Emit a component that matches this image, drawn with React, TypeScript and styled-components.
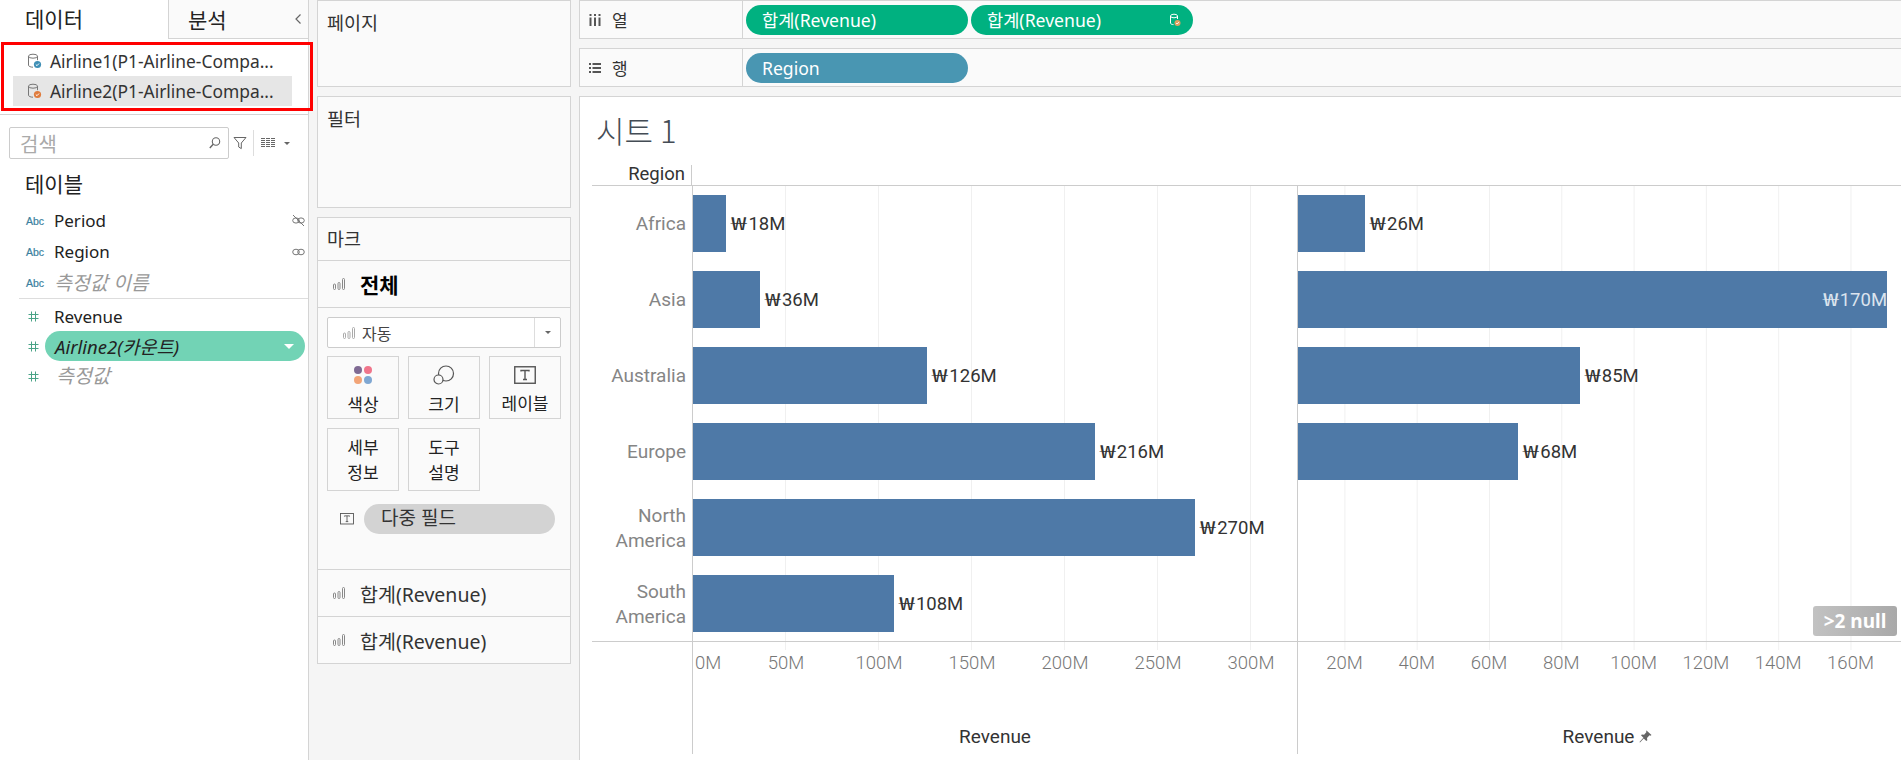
import React from "react";
import styled, { createGlobalStyle } from "styled-components";

const Global = createGlobalStyle`
  html, body { margin: 0; padding: 0; background: #f5f5f5; overflow: hidden; }
  * { box-sizing: border-box; }
  #root { width: 1901px; height: 760px; font-family: "Noto Sans", "Noto Sans CJK KR", sans-serif; color: #222; }
`;
const LINE = "#d4d4d4";
const Page = styled.div`display: flex; width: 1901px; height: 760px; overflow: hidden; background: #f5f5f5;`;

/* ---------- sidebar ---------- */
const Sidebar = styled.aside`position: relative; flex: 0 0 309px; height: 760px; background: #fff; border-right: 1px solid ${LINE};`;
const Tabs = styled.div`display: flex; height: 39px;`;
const DataTab = styled.div`flex: 0 0 168px; padding-left: 25px; font-size: 21px; line-height: 39px;`;
const AnalysisTab = styled.div`flex: 1; display: flex; justify-content: space-between; align-items: center; padding: 0 6px 0 19px; font-size: 21px; background: #fafafa; border-left: 1px solid ${LINE}; border-bottom: 1px solid ${LINE};`;
const Sources = styled.div`padding: 7px 16px 8px 13px; border-bottom: 1px solid ${LINE};`;
const SourceRow = styled.div<{ $active?: boolean }>`display: flex; align-items: center; gap: 8px; width: 279px; height: 30px; padding-left: 14px; font-size: 17.4px; color: #333; background: ${(p) => (p.$active ? "#e6e6e6" : "transparent")};`;
const RedFrame = styled.div`position: absolute; left: 1px; top: 42px; width: 312px; height: 69px; border: 3px solid #f00; pointer-events: none;`;
const SearchRow = styled.div`display: flex; align-items: center; margin: 12px 0 0 9px; height: 32px;`;
const SearchBox = styled.div`display: flex; justify-content: space-between; align-items: center; width: 220px; height: 32px; padding: 0 6px 0 10px; border: 1px solid #ccc; border-radius: 2px; color: #aaa; font-size: 20px;`;
const SearchTools = styled.div`display: flex; align-items: center; margin-left: 4px; height: 28px;`;
const ToolSep = styled.div`width: 1px; height: 26px; background: #ddd; margin: 0 7px 0 6px;`;
const CaretGap = styled.span`width: 9px;`;
const SectionTitle = styled.div`height: 46px; padding-left: 25px; font-size: 21px; line-height: 50px;`;
const FieldGroup = styled.div<{ $divider?: boolean }>`
  padding-top: ${(p) => (p.$divider ? "2px" : "0")};
  ${(p) => (p.$divider ? `margin-left: 19px; border-top: 1px solid #ddd;` : "")}
`;
const FieldRow = styled.div<{ $h: number; $inset?: boolean }>`display: flex; align-items: center; height: ${(p) => p.$h}px; padding-left: ${(p) => (p.$inset ? "7px" : "26px")}; padding-right: 3px;`;
const Abc = styled.span`flex: 0 0 28px; font-size: 10.5px; font-weight: 400; -webkit-text-stroke: 0.2px #3a7f9e; color: #3a7f9e; font-family: "Liberation Sans", sans-serif;`;
const HashCell = styled.span`flex: 0 0 19px; padding-left: 2px; display: flex;`;
const FieldName = styled.span<{ $calc?: boolean; $indent?: number }>`flex: 1; margin-left: ${(p) => p.$indent ?? 0}px; margin-top: ${(p) => (p.$calc ? -3 : 0)}px; font-size: ${(p) => (p.$calc ? 19.5 : 17)}px; color: ${(p) => (p.$calc ? "#999" : "#222")}; font-style: ${(p) => (p.$calc ? "italic" : "normal")};`;
const FieldPill = styled.div`flex: 1; display: flex; align-items: center; justify-content: space-between; height: 30px; padding: 0 11px 0 10px; background: #72d3b5; border-radius: 15px; font-size: 18.5px; font-style: italic; color: #222;`;
const CaretDown = styled.span<{ $c: string; $s: number }>`width: 0; height: 0; border-left: ${(p) => p.$s}px solid transparent; border-right: ${(p) => p.$s}px solid transparent; border-top: ${(p) => p.$s}px solid ${(p) => p.$c};`;

/* ---------- middle ---------- */
const Middle = styled.div`flex: 0 0 254px; margin-left: 8px; display: flex; flex-direction: column;`;
const Card = styled.section<{ $h?: number; $mb?: number }>`
  ${(p) => (p.$h ? `height: ${p.$h}px;` : "")}
  margin-bottom: ${(p) => p.$mb ?? 9}px;
  background: #fafafa; border: 1px solid ${LINE};
`;
const CardTitle = styled.div`padding: 8px 9px 0; font-size: 18.5px; color: #333;`;
const MarkHead = styled.div`height: 43px; padding: 7px 9px 0; font-size: 18.5px; color: #333; border-bottom: 1px solid ${LINE};`;
const MarkLayer = styled.div<{ $bold?: boolean; $line?: boolean }>`
  display: flex; align-items: center; height: 47px; padding-left: 15px; gap: 14px;
  ${(p) => (p.$line ? `border-top: 1px solid ${LINE};` : `border-bottom: 1px solid ${LINE};`)}
  font-size: ${(p) => (p.$bold ? 21 : 19.5)}px; font-weight: ${(p) => (p.$bold ? 700 : 400)}; color: ${(p) => (p.$bold ? "#000" : "#333")};
`;
const MarkBody = styled.div`padding: 9px 9px 35px;`;
const TypeSelect = styled.div`display: flex; height: 31px; width: 234px; background: #fff; border: 1px solid #ccc; border-radius: 2px; margin-bottom: 8px;`;
const TypeValue = styled.div`flex: 1; display: flex; align-items: center; gap: 6px; padding-left: 15px; font-size: 16px; color: #444;`;
const TypeCaret = styled.div`flex: 0 0 26px; display: flex; align-items: center; justify-content: center; border-left: 1px solid #ddd;`;
const MarkGrid = styled.div`display: grid; grid-template-columns: repeat(3, 72px); grid-auto-rows: 63px; gap: 9px;`;
const MarkBtn = styled.div<{ $icon?: boolean }>`display: flex; flex-direction: column; align-items: center; justify-content: center; gap: 7px; padding-top: ${(p) => (p.$icon ? "7px" : "0")}; border: 1px solid #d4d4d4; background: #fafafa; font-size: 17px; line-height: 25px; text-align: center; color: #222;`;
const MarkSlot = styled.div`display: flex; align-items: center; margin: 13px 0 0 13px; gap: 10px;`;
const GrayPill = styled.div`width: 191px; height: 30px; padding-left: 17px; border-radius: 15px; background: #d3d3d3; font-size: 19px; line-height: 28px; color: #333;`;

/* ---------- main ---------- */
const Main = styled.main`flex: 1; margin-left: 8px; display: flex; flex-direction: column; min-width: 0;`;
const Shelf = styled.div<{ $mb: number }>`display: flex; height: 39px; margin-bottom: ${(p) => p.$mb}px; background: #fafafa; border: 1px solid ${LINE}; border-right: 0;`;
const ShelfHead = styled.div`flex: 0 0 163px; display: flex; align-items: center; padding-left: 9px; gap: 11px; font-size: 17px; color: #333; border-right: 1px solid ${LINE};`;
const ShelfPills = styled.div`display: flex; align-items: center; gap: 3px; padding-left: 3px;`;
const Pill = styled.div<{ $bg: string }>`display: flex; align-items: center; justify-content: space-between; width: 222px; height: 30px; padding: 0 12px 0 16px; border-radius: 15px; background: ${(p) => p.$bg}; color: #fff; font-size: 17.6px; white-space: nowrap;`;

const View = styled.div`flex: 1; background: #fff; border: 1px solid ${LINE}; border-right: 0; border-bottom: 0; padding-left: 12px; font-family: Roboto, "Noto Sans CJK KR", sans-serif;`;
const SheetTitle = styled.div`height: 66px; padding: 14px 0 0 4px; font-size: 31px; line-height: 38px; font-weight: 300; color: #444c55; font-family: "Noto Sans CJK KR", sans-serif;`;
const ChartHead = styled.div`display: flex; height: 23px; border-bottom: 1px solid #ccc;`;
const ColHead = styled.div`flex: 0 0 100px; margin: 2px -1px 0 0; padding-right: 6px; text-align: right; font-size: 18.5px; line-height: 18px; color: #333; border-right: 1px solid #ccc;`;
const ChartBody = styled.div`display: flex; height: 456px; border-bottom: 1px solid #ccc;`;
const LabelCol = styled.div`flex: 0 0 100px;`;
const RowLabel = styled.div`display: flex; align-items: center; justify-content: flex-end; height: 76px; padding: 0 6px 1px 0; text-align: right; font-size: 19px; line-height: 25px; color: #858585;`;
const Pane = styled.div<{ $w: number; $step: number; $off: number }>`
  position: relative; flex: 0 0 ${(p) => p.$w}px; border-left: 1px solid #ccc; overflow: hidden;
  background-image: linear-gradient(to right, #f0f0f0 1px, transparent 1px);
  background-size: ${(p) => p.$step}px 100%;
  background-position: ${(p) => p.$off}px 0;
`;
const BarRow = styled.div`display: flex; height: 76px; padding: 9px 0 10px;`;
const Bar = styled.div<{ $w: number }>`flex: 0 0 ${(p) => p.$w}px; display: flex; align-items: center; justify-content: flex-end; background: #4e79a7;`;
const BarValue = styled.span<{ $inside?: boolean }>`align-self: center; margin-left: ${(p) => (p.$inside ? 0 : 5)}px; font-size: 18.5px; line-height: 22px; white-space: nowrap; color: ${(p) => (p.$inside ? "#dbe4ee" : "#333")};`;
const Won = styled.span`display: inline-block; width: 17px; transform: scaleX(1.55); transform-origin: left center; font-family: "Noto Sans CJK KR", sans-serif; font-size: 18px; line-height: 18px;`;
const NullBadge = styled.div`position: absolute; right: 4px; bottom: 5px; width: 84px; height: 30px; border-radius: 3px; background: linear-gradient(to right, #c2c2c2, #a9a9a9); color: #fff; font-family: "Noto Sans", sans-serif; font-weight: 700; font-size: 19px; line-height: 30px; text-align: center;`;
const ChartAxis = styled.div`display: flex; height: 112px;`;
const AxisPane = styled.div<{ $w: number }>`flex: 0 0 ${(p) => p.$w}px; border-left: 1px solid #ccc; overflow: hidden;`;
const TickStrip = styled.div<{ $step: number; $off: number }>`
  height: 8px;
  background-image: linear-gradient(to right, #f0f0f0 1px, transparent 1px);
  background-size: ${(p) => p.$step}px 100%;
  background-position: ${(p) => p.$off}px 0;
`;
const Ticks = styled.div`display: flex; height: 26px; align-items: center;`;
const Tick = styled.span<{ $w: number; $first?: boolean }>`flex: 0 0 ${(p) => p.$w}px; text-align: ${(p) => (p.$first ? "left" : "center")}; padding-left: ${(p) => (p.$first ? "2px" : "0")}; font-size: 18.5px; font-weight: 300; color: #777; white-space: nowrap;`;
const AxisTitle = styled.div<{ $shift?: number }>`display: flex; align-items: center; justify-content: center; gap: 5px; margin-top: 49px; padding-left: ${(p) => p.$shift ?? 0}px; font-size: 19px; color: #333;`;

/* ---------- icons ---------- */
const Db = ({ c }: { c: string }) => (
  <svg width="15" height="16" viewBox="0 0 15 16" fill="none" style={{ flex: "0 0 15px" }}>
    <ellipse cx="6" cy="3.2" rx="4.5" ry="2" stroke="#777" />
    <path d="M1.5 3.2v9c0 1.1 2 2 4.5 2" stroke="#777" />
    <path d="M10.5 3.2v4" stroke="#777" />
    <circle cx="10.5" cy="11.5" r="3.6" fill={c} />
    <path d="M8.8 11.5l1.2 1.2 2-2.2" stroke="#fff" strokeWidth="1" />
  </svg>
);
const Search = () => (
  <svg width="14" height="14" viewBox="0 0 14 14" fill="none">
    <circle cx="8" cy="5.5" r="3.7" stroke="#666" strokeWidth="1.1" />
    <path d="M5.2 8.3L1.8 12" stroke="#666" strokeWidth="1.4" />
  </svg>
);
const Funnel = () => (
  <svg width="14" height="14" viewBox="0 0 14 14" fill="none">
    <path d="M1 1.5h12L8.3 7v5.6L5.7 11V7z" stroke="#666" strokeWidth="1" />
  </svg>
);
const GridIcon = () => (
  <svg width="14" height="10" viewBox="0 0 14 10" fill="#666">
    {[0, 2, 4, 6, 8].map((y) => (
      <path key={y} d={`M0 ${y}h4v1H0zM5 ${y}h4v1H5zM10 ${y}h4v1h-4z`} />
    ))}
  </svg>
);
const Chevron = () => (
  <svg width="8" height="12" viewBox="0 0 8 12" fill="none">
    <path d="M6.5 1.5L2 6l4.5 4.5" stroke="#666" strokeWidth="1.2" />
  </svg>
);
const BrokenLink = () => (
  <svg width="13" height="13" viewBox="0 0 13 13" fill="none" stroke="#777">
    <ellipse cx="4" cy="6.5" rx="3.3" ry="2.6" />
    <ellipse cx="9" cy="6.5" rx="3.3" ry="2.6" />
    <path d="M1 1l11 11" />
  </svg>
);
const LinkIcon = () => (
  <svg width="13" height="8" viewBox="0 0 13 8" fill="none" stroke="#777">
    <ellipse cx="4" cy="4" rx="3.3" ry="2.8" />
    <ellipse cx="9" cy="4" rx="3.3" ry="2.8" />
  </svg>
);
const Hash = () => (
  <svg width="11" height="11" viewBox="0 0 11 11" stroke="#4aa387" fill="none">
    <path d="M3.5 0.5v10M7.5 0.5v10M0.5 3.5h10M0.5 7.5h10" />
  </svg>
);
const BarsIcon = ({ c = "#888" }: { c?: string }) => (
  <svg width="13" height="12" viewBox="0 0 13 12" fill="none" stroke={c} style={{ flex: "0 0 13px" }}>
    <rect x="0.5" y="6" width="2" height="5.5" rx="1" />
    <rect x="5" y="4.5" width="2" height="7" rx="1" />
    <rect x="9.5" y="0.5" width="2" height="11" rx="1" />
  </svg>
);
const Dots = () => (
  <svg width="20" height="20" viewBox="0 0 20 20">
    <circle cx="5" cy="5" r="4" fill="#7f6a93" />
    <circle cx="15" cy="5" r="4" fill="#f0758b" />
    <circle cx="5" cy="15" r="4" fill="#f2a477" />
    <circle cx="15" cy="15" r="4" fill="#7fa7d2" />
  </svg>
);
const SizeIcon = () => (
  <svg width="22" height="20" viewBox="0 0 22 20" fill="none" stroke="#555" strokeWidth="1.2">
    <circle cx="13" cy="8.5" r="7.5" />
    <circle cx="5.5" cy="14.5" r="4.5" fill="#fafafa" />
  </svg>
);
const TBox = ({ s }: { s: number }) => (
  <svg width={s} height={s * 0.82} viewBox="0 0 22 18" fill="none">
    <rect x="0.75" y="0.75" width="20.5" height="16.5" stroke="#555" strokeWidth="1.4" />
    <path d="M7 5.5V4.5h8v1M11 4.5v9M9 13.5h4" stroke="#555" strokeWidth="1.4" />
  </svg>
);
const ColsIcon = () => (
  <svg width="12" height="12" viewBox="0 0 12 12" fill="#555">
    <path d="M0.5 0h2v2h-2zM5 0h2v2H5zM9.5 0h2v2h-2zM0.5 3.5h2V12h-2zM5 3.5h2V12H5zM9.5 3.5h2V12h-2z" />
  </svg>
);
const RowsIcon = () => (
  <svg width="12" height="12" viewBox="0 0 12 12" fill="#555">
    <path d="M0 1h2v2H0zM3.5 1H12v2H3.5zM0 5h2v2H0zM3.5 5H12v2H3.5zM0 9h2v2H0zM3.5 9H12v2H3.5z" />
  </svg>
);
const Pin = () => (
  <svg width="13" height="13" viewBox="0 0 13 13" fill="#666">
    <path d="M7.5 0.5l5 4.5-1 .8-1-.5-2.5 2.7.3 2.2-1 .9-2.6-2.6L1 12.5l-.5-.5 3.9-4.2L2 5.3l.9-.9 2.2.3 2.4-2.7-.5-1z" />
  </svg>
);
const SmallDb = () => (
  <svg width="12" height="14" viewBox="0 0 12 14" fill="none">
    <ellipse cx="5" cy="3" rx="3.5" ry="1.8" stroke="#fff" />
    <path d="M1.5 3v7c0 1 1.5 1.6 3 1.6M8.5 3v3" stroke="#fff" />
    <circle cx="8.5" cy="10" r="3" fill="#e0a060" />
    <path d="M7.2 10l1 1 1.6-1.8" stroke="#fff" />
  </svg>
);

/* ---------- data ---------- */
const regions = [
  ["Africa"],
  ["Asia"],
  ["Australia"],
  ["Europe"],
  ["North", "America"],
  ["South", "America"],
];
const left = [18, 36, 126, 216, 270, 108];
const right: (number | null)[] = [25.6, 170, 85, 68, null, null];
const PX1 = 1.86;
const PX2 = 3.615;
const ORIGIN2 = 25.5;

export default function App() {
  return (
    <Page>
      <Global />
      <Sidebar>
        <Tabs>
          <DataTab>데이터</DataTab>
          <AnalysisTab>
            분석
            <Chevron />
          </AnalysisTab>
        </Tabs>
        <Sources>
          <SourceRow>
            <Db c="#3f8fb5" />
            Airline1(P1-Airline-Compa...
          </SourceRow>
          <SourceRow $active>
            <Db c="#e07b3c" />
            Airline2(P1-Airline-Compa...
          </SourceRow>
        </Sources>
        <RedFrame />
        <SearchRow>
          <SearchBox>
            검색
            <Search />
          </SearchBox>
          <SearchTools>
            <Funnel />
            <ToolSep />
            <GridIcon />
            <CaretGap />
            <CaretDown $c="#666" $s={3.5} />
          </SearchTools>
        </SearchRow>
        <SectionTitle>테이블</SectionTitle>
        <FieldGroup>
          <FieldRow $h={31}>
            <Abc>Abc</Abc>
            <FieldName>Period</FieldName>
            <BrokenLink />
          </FieldRow>
          <FieldRow $h={31}>
            <Abc>Abc</Abc>
            <FieldName>Region</FieldName>
            <LinkIcon />
          </FieldRow>
          <FieldRow $h={31}>
            <Abc>Abc</Abc>
            <FieldName $calc>측정값 이름</FieldName>
          </FieldRow>
        </FieldGroup>
        <FieldGroup $divider>
          <FieldRow $h={30} $inset>
            <HashCell><Hash /></HashCell>
            <FieldName $indent={9}>Revenue</FieldName>
          </FieldRow>
          <FieldRow $h={30} $inset>
            <HashCell><Hash /></HashCell>
            <FieldPill>
              Airline2(카운트)
              <CaretDown $c="#fff" $s={5} />
            </FieldPill>
          </FieldRow>
          <FieldRow $h={30} $inset>
            <HashCell><Hash /></HashCell>
            <FieldName $calc $indent={11}>측정값</FieldName>
          </FieldRow>
        </FieldGroup>
      </Sidebar>

      <Middle>
        <Card $h={87}>
          <CardTitle>페이지</CardTitle>
        </Card>
        <Card $h={112}>
          <CardTitle>필터</CardTitle>
        </Card>
        <Card $mb={0}>
          <MarkHead>마크</MarkHead>
          <MarkLayer $bold>
            <BarsIcon />
            전체
          </MarkLayer>
          <MarkBody>
            <TypeSelect>
              <TypeValue>
                <BarsIcon c="#aaa" />
                자동
              </TypeValue>
              <TypeCaret>
                <CaretDown $c="#666" $s={3.5} />
              </TypeCaret>
            </TypeSelect>
            <MarkGrid>
              <MarkBtn $icon><Dots />색상</MarkBtn>
              <MarkBtn $icon><SizeIcon />크기</MarkBtn>
              <MarkBtn $icon><TBox s={22} />레이블</MarkBtn>
              <MarkBtn>세부<br />정보</MarkBtn>
              <MarkBtn>도구<br />설명</MarkBtn>
            </MarkGrid>
            <MarkSlot>
              <TBox s={14} />
              <GrayPill>다중 필드</GrayPill>
            </MarkSlot>
          </MarkBody>
          <MarkLayer $line>
            <BarsIcon />
            합계(Revenue)
          </MarkLayer>
          <MarkLayer $line>
            <BarsIcon />
            합계(Revenue)
          </MarkLayer>
        </Card>
      </Middle>

      <Main>
        <Shelf $mb={9}>
          <ShelfHead>
            <ColsIcon />열
          </ShelfHead>
          <ShelfPills>
            <Pill $bg="#00b180">합계(Revenue)</Pill>
            <Pill $bg="#00b180">
              합계(Revenue)
              <SmallDb />
            </Pill>
          </ShelfPills>
        </Shelf>
        <Shelf $mb={9}>
          <ShelfHead>
            <RowsIcon />행
          </ShelfHead>
          <ShelfPills>
            <Pill $bg="#4996b2">Region</Pill>
          </ShelfPills>
        </Shelf>
        <View>
          <SheetTitle>시트 1</SheetTitle>
          <ChartHead>
            <ColHead>Region</ColHead>
          </ChartHead>
          <ChartBody>
            <LabelCol>
              {regions.map((r) => (
                <RowLabel key={r.join()}>
                  <div>
                    {r.map((l) => (
                      <div key={l}>{l}</div>
                    ))}
                  </div>
                </RowLabel>
              ))}
            </LabelCol>
            <Pane $w={605} $step={93} $off={92}>
              {left.map((v) => (
                <BarRow key={v}>
                  <Bar $w={v * PX1} />
                  <BarValue><Won>₩</Won>{v}M</BarValue>
                </BarRow>
              ))}
            </Pane>
            <Pane $w={604} $step={72.3} $off={46.4}>
              {right.map((v, i) => (
                <BarRow key={i}>
                  {v !== null && v > 150 && (
                    <Bar $w={v * PX2 - ORIGIN2}>
                      <BarValue $inside><Won>₩</Won>{v}M</BarValue>
                    </Bar>
                  )}
                  {v !== null && v <= 150 && (
                    <>
                      <Bar $w={v * PX2 - ORIGIN2} />
                      <BarValue><Won>₩</Won>{Math.round(v)}M</BarValue>
                    </>
                  )}
                </BarRow>
              ))}
              <NullBadge>&gt;2 null</NullBadge>
            </Pane>
          </ChartBody>
          <ChartAxis>
            <LabelCol />
            <AxisPane $w={605}>
              <TickStrip $step={93} $off={92} />
              <Ticks>
                <Tick $w={46.5} $first>0M</Tick>
                {[50, 100, 150, 200, 250, 300].map((t) => (
                  <Tick key={t} $w={93}>{t}M</Tick>
                ))}
              </Ticks>
              <AxisTitle>Revenue</AxisTitle>
            </AxisPane>
            <AxisPane $w={604}>
              <TickStrip $step={72.3} $off={46.4} />
              <Ticks>
                <Tick $w={10.3} />
                {[20, 40, 60, 80, 100, 120, 140, 160].map((t) => (
                  <Tick key={t} $w={72.3}>{t}M</Tick>
                ))}
              </Ticks>
              <AxisTitle $shift={16}>
                Revenue <Pin />
              </AxisTitle>
            </AxisPane>
          </ChartAxis>
        </View>
      </Main>
    </Page>
  );
}
